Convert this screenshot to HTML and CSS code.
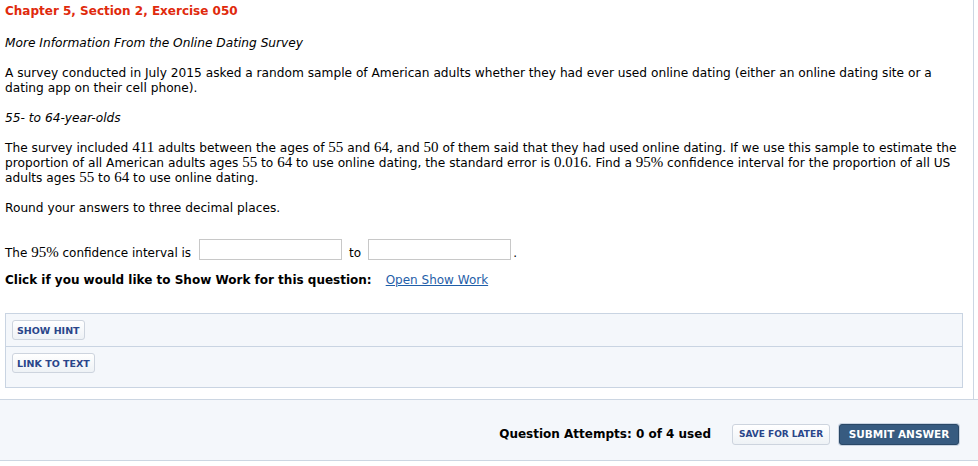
FILE: index.html
```html
<!DOCTYPE html>
<html>
<head>
<meta charset="utf-8">
<link rel="stylesheet" href="styles.css">
</head>
<body>
<div class="content">
  <h1 class="title">Chapter 5, Section 2, Exercise 050</h1>
  <p class="sub">More Information From the Online Dating Survey</p>
  <p>A survey conducted in July 2015 asked a random sample of American adults whether they had ever used online dating (either an online dating site or a dating app on their cell phone).</p>
  <p class="sub">55- to 64-year-olds</p>
  <p>The survey included <span class="m">411</span> adults between the ages of <span class="m">55</span> and <span class="m">64</span>, and <span class="m">50</span> of them said that they had used online dating. If we use this sample to estimate the proportion of all American adults ages <span class="m">55</span> to <span class="m">64</span> to use online dating, the standard error is <span class="m">0.016</span>. Find a <span class="m">95%</span> confidence interval for the proportion of all US adults ages <span class="m">55</span> to <span class="m">64</span> to use online dating.</p>
  <p>Round your answers to three decimal places.</p>
  <div class="answer">
    <span class="lbl">The <span class="m">95%</span> confidence interval is</span>
    <input class="box" type="text">
    <span class="lbl">to</span>
    <input class="box" type="text">
    <span class="lbl dot">.</span>
  </div>
  <div class="showwork"><b>Click if you would like to Show Work for this question:</b><a class="link" href="#">Open Show Work</a></div>
  <div class="hints">
    <div class="hint-row"><span class="btn">SHOW HINT</span></div>
    <div class="hint-row last"><span class="btn">LINK TO TEXT</span></div>
  </div>
</div>
<div class="footer">
  <span class="attempts">Question Attempts: 0 of 4 used</span>
  <span class="save">SAVE FOR LATER</span>
  <span class="submit">SUBMIT ANSWER</span>
</div>
</body>
</html>
```

FILE: styles.css
```css
html, body {
  margin: 0;
  padding: 0;
  background: #fff;
}
body {
  font-family: "DejaVu Sans", Verdana, sans-serif;
  font-size: 12px;
  line-height: 15px;
  color: #000;
}
.content {
  box-sizing: border-box;
  width: 974px;
  border-right: 1px solid #ccd6e3;
  padding: 4px 0 11px 5px;
}
.title {
  margin: 0 0 17px 0;
  font-size: 12px;
  line-height: 15px;
  font-weight: bold;
  color: #e02a0c;
}
p {
  margin: 0 0 15px 0;
  max-width: 956px;
  font-size: 12.2px;
}
.sub {
  font-style: italic;
}
.m {
  font-family: "Liberation Serif", "Times New Roman", serif;
  font-size: 15px;
  line-height: 10px;
}
.answer {
  display: flex;
  align-items: flex-end;
  margin-top: 23px;
  height: 22px;
}
.lbl {
  line-height: 15px;
}
.box {
  box-sizing: border-box;
  width: 143px;
  height: 21px;
  margin: 0 0 1px 0;
  padding: 0;
  border: 1px solid #c8c8c8;
  background: #fff;
  outline: none;
}
.answer .lbl:first-child {
  margin-right: 8px;
}
.answer .lbl:nth-child(3) {
  margin: 0 7px 0 7px;
}
.dot {
  margin-left: 2px;
}
.showwork {
  margin-top: 12px;
  display: flex;
}
.showwork b {
  font-weight: bold;
}
.link {
  margin-left: 14px;
  color: #1f5ea8;
  text-decoration: underline;
}
.hints {
  box-sizing: border-box;
  width: 958px;
  margin-top: 25px;
  border: 1px solid #c9d4e2;
  background: #f4f7fb;
}
.hint-row {
  padding: 6px;
  border-bottom: 1px solid #c9d4e2;
  display: flex;
}
.hint-row.last {
  border-bottom: none;
  padding-bottom: 14px;
}
.btn, .save {
  box-sizing: border-box;
  display: inline-flex;
  align-items: center;
  justify-content: center;
  height: 20px;
  padding: 0 4px;
  border: 1px solid #cdd4de;
  border-radius: 3px;
  background: linear-gradient(#ffffff, #eef2f6);
  color: #2a468a;
  font-size: 9.5px;
  font-weight: bold;
  white-space: nowrap;
}
.footer {
  box-sizing: border-box;
  height: 62px;
  border-top: 1px solid #ccd6e2;
  border-bottom: 1px solid #ccd6e2;
  background: #f4f7fb;
  display: flex;
  align-items: flex-start;
  justify-content: flex-end;
  padding: 24px 19px 0 0;
}
.attempts {
  font-weight: bold;
  line-height: 21px;
  margin-right: 21px;
  white-space: nowrap;
}
.save {
  width: 98px;
  height: 21px;
  padding: 0;
  margin-right: 9px;
  font-size: 9px;
}
.submit {
  box-sizing: border-box;
  display: inline-flex;
  align-items: center;
  justify-content: center;
  width: 120px;
  height: 21px;
  border: 1px solid #2a4866;
  border-radius: 3px;
  background: #375b80;
  box-shadow: 0 0 0 1px #c9d4e2;
  color: #fff;
  font-size: 10.5px;
  font-weight: bold;
  white-space: nowrap;
}
```
